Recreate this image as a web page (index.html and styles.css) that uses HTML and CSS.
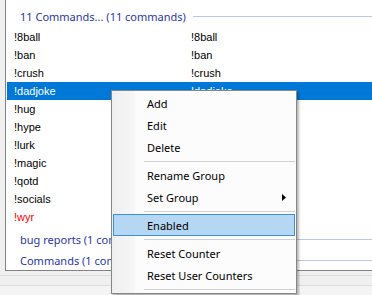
FILE: index.html
```html
<!DOCTYPE html>
<html>
<head>
<meta charset="utf-8">
<link rel="stylesheet" href="styles.css">
</head>
<body>
<div class="window">
  <div class="list">
    <div class="group first"><span class="gtitle">11 Commands... (11 commands)</span><span class="rule"></span></div>
    <div class="rows">
      <div class="row"><span class="cell">!8ball</span><span class="cell">!8ball</span></div>
      <div class="row"><span class="cell">!ban</span><span class="cell">!ban</span></div>
      <div class="row"><span class="cell">!crush</span><span class="cell">!crush</span></div>
      <div class="row selected"><span class="cell">!dadjoke</span><span class="cell">!dadjoke</span></div>
      <div class="row"><span class="cell">!hug</span><span class="cell">!hug</span></div>
      <div class="row"><span class="cell">!hype</span><span class="cell">!hype</span></div>
      <div class="row"><span class="cell">!lurk</span><span class="cell">!lurk</span></div>
      <div class="row"><span class="cell">!magic</span><span class="cell">!magic</span></div>
      <div class="row"><span class="cell">!qotd</span><span class="cell">!qotd</span></div>
      <div class="row"><span class="cell">!socials</span><span class="cell">!socials</span></div>
      <div class="row disabled"><span class="cell">!wyr</span><span class="cell">!wyr</span></div>
    </div>
    <div class="group second"><span class="gtitle">bug reports (1 commands)</span><span class="rule"></span></div>
    <div class="group"><span class="gtitle">Commands (1 commands)</span><span class="rule"></span></div>
  </div>
  <div class="statusarea">
    <div class="strip"></div>
    <div class="strip"></div>
  </div>

  <div class="menu">
    <div class="item">Add</div>
    <div class="item">Edit</div>
    <div class="item">Delete</div>
    <div class="sep"></div>
    <div class="item">Rename Group</div>
    <div class="item sub">Set Group<svg class="arrow" width="4" height="7" viewBox="0 0 4 7"><polygon points="0,0 4,3.5 0,7" fill="#000"/></svg></div>
    <div class="sep"></div>
    <div class="item hot">Enabled</div>
    <div class="sep"></div>
    <div class="item">Reset Counter</div>
    <div class="item">Reset User Counters</div>
    <div class="sep"></div>
  </div>
</div>
</body>
</html>
```

FILE: styles.css
```css
* { box-sizing: border-box; }
html, body {
  margin: 0;
  padding: 0;
  background: #ffffff;
  overflow: hidden;
}
.window {
  position: relative;
  width: 372px;
  height: 295px;
  overflow: hidden;
  background: #f0f0f0;
}
.list {
  margin-left: 5px;
  width: 400px;
  height: 271px;
  background: #ffffff;
  border-left: 1px solid #828282;
  border-bottom: 1px solid #828282;
  padding: 6px 0 0 1px;
  overflow: hidden;
}
.group {
  height: 21px;
  display: flex;
  align-items: center;
  padding-left: 13px;
  font-family: "Segoe UI", "Noto Sans", sans-serif;
  font-size: 11px;
  color: #2a36a8;
}
.group.first { height: 20px; margin-bottom: 2px; }
.group.second { margin-top: 3px; }
.gtitle { white-space: nowrap; }
.rule {
  flex: 1;
  height: 1px;
  margin-left: 7px;
  background: #bcc8e3;
}
.rows {
  display: flex;
  flex-direction: column;
}
.row {
  height: 18px;
  display: grid;
  grid-template-columns: 177px 1fr;
  align-items: center;
  font-family: "Liberation Sans", Arial, sans-serif;
  font-size: 11px;
  color: #000;
}
.cell { padding-left: 7px; white-space: nowrap; }
.row.selected { background: #0078d7; color: #fff; }
.row.disabled { color: #ff0000; }

.statusarea {
  height: 24px;
  padding-top: 4px;
}
.strip {
  height: 10px;
  border-top: 1px solid #dcdcdc;
  background: #f0f0f0;
}
.strip + .strip { background: #f4f4f4; }

.menu {
  position: absolute;
  left: 111px;
  top: 90px;
  width: 186px;
  border: 1px solid #868686;
  padding: 1px 0;
  background: linear-gradient(90deg, #efefef 0, #f6f6f6 22px, #fcfcfc 24px, #fcfcfc 100%);
  box-shadow: 2px 2px 2px rgba(0,0,0,0.28);
  font-family: "Segoe UI", "Noto Sans", sans-serif;
  font-size: 11px;
  color: #000;
}
.item {
  height: 22px;
  margin: 0 1px;
  border: 1px solid transparent;
  padding-left: 33px;
  display: flex;
  align-items: center;
  white-space: nowrap;
  position: relative;
}
.item.hot {
  background: #b6d7f3;
  border-color: #3a90dd;
}
.arrow {
  position: absolute;
  right: 8px;
  top: 7px;
}
.sep {
  height: 6px;
  padding-top: 3px;
  margin: 0 1px 0 32px;
}
.sep::after {
  content: "";
  display: block;
  height: 1px;
  background: #d0d0d0;
}
```
